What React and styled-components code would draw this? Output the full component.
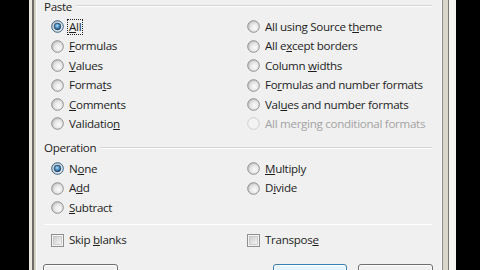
import styled, { createGlobalStyle } from "styled-components";

const GlobalStyle = createGlobalStyle`
  html, body {
    margin: 0;
    padding: 0;
    background: #000;
  }
  body {
    font-family: "Open Sans", "Noto Sans", sans-serif;
  }
`;

const Screen = styled.div`
  width: 480px;
  height: 270px;
  overflow: hidden;
  background: #000;
  display: flex;
  padding-left: 29px;
  box-sizing: border-box;
`;

const FrameLeft = styled.div`
  flex: none;
  width: 8px;
  background: linear-gradient(
    to right,
    #ebe8df 0 3px,
    #6d6c68 3px 5px,
    #d6d2c6 5px 7px,
    #fbfbfb 7px 8px
  );
`;

const FrameRight = styled.div`
  flex: none;
  width: 15px;
  background: linear-gradient(
    to right,
    #fdfdfd 0 1px,
    #8a8a88 1px 2px,
    #dad6ca 2px 7px,
    #7a7975 7px 8px,
    #f6f5f1 8px 15px
  );
`;

const Content = styled.div`
  flex: none;
  width: 404px;
  height: 270px;
  background: #f0f0f0;
  padding-left: 7px;
  box-sizing: border-box;
  display: flex;
  flex-direction: column;
  color: #1e1e1e;
  font-size: 11.6px;
  letter-spacing: -0.3px;
`;

const GroupHeader = styled.div`
  display: flex;
  align-items: center;
  gap: 4px;
  height: 12px;
  line-height: 12px;
  margin-right: 9px;
  margin-top: ${(p) => p.$top}px;
`;

const HeaderLine = styled.div`
  flex: 1;
  height: 1px;
  background: #d5d5d5;
  border-bottom: 1px solid #fdfdfd;
  margin-top: ${(p) => p.$offset || 0}px;
`;

const OptionGrid = styled.div`
  display: grid;
  grid-template-columns: 196px 1fr;
  grid-template-rows: repeat(${(p) => p.$rows}, ${(p) => p.$rowHeight}px);
  grid-auto-flow: column;
  padding-left: 7px;
  margin-top: ${(p) => p.$top}px;
`;

const Option = styled.label`
  display: flex;
  align-items: center;
  gap: 5px;
  white-space: nowrap;
  color: ${(p) => (p.$disabled ? "#a3a3a3" : "#1e1e1e")};
`;

const Text = styled.span`
  line-height: 14px;
  padding: 0 1px;
  margin-left: -1px;
  outline: ${(p) => (p.$focus ? "1px dotted #222" : "none")};
  outline-offset: 0;
`;

const Key = styled.span`
  text-decoration: underline;
  text-underline-offset: 1px;
`;

const Separator = styled.div`
  height: 1px;
  background: #d5d5d5;
  border-bottom: 1px solid #fdfdfd;
  margin: 6px 9px 0 0;
`;

const ButtonBar = styled.div`
  display: flex;
  justify-content: space-between;
  margin: 14px 8px 0 -1px;
`;

const ButtonGroup = styled.div`
  display: flex;
  gap: 11px;
`;

const Button = styled.button`
  width: ${(p) => p.$w}px;
  height: 23px;
  box-sizing: border-box;
  padding: 5px 0 0;
  line-height: 16px;
  border-radius: 3px;
  font: inherit;
  color: #1e1e1e;
  border: 1px solid ${(p) => (p.$default ? "#3c7fb1" : "#707070")};
  background: ${(p) =>
    p.$default
      ? "linear-gradient(#eaf6fd, #d9f0fc 50%, #bee6fd 51%, #a7d9f5)"
      : "linear-gradient(#f2f2f2, #ebebeb 50%, #dddddd 51%, #cfcfcf)"};
  box-shadow: inset 0 0 0 1px rgba(255, 255, 255, 0.8);
`;

function Radio({ checked, disabled }) {
  const ring = disabled ? "#cfcfcf" : checked ? "#2c628b" : "#8f8f8f";
  return (
    <svg width="13" height="13" viewBox="0 0 13 13" style={{ flex: "none" }}>
      <defs>
        <radialGradient id="rfill" cx="0.6" cy="0.6" r="0.6">
          <stop offset="0" stopColor="#fbfbfb" />
          <stop offset="0.6" stopColor="#e6e6e6" />
          <stop offset="1" stopColor="#c4c4c4" />
        </radialGradient>
        <radialGradient id="rdot" cx="0.45" cy="0.4" r="0.6">
          <stop offset="0" stopColor="#b9e0f7" />
          <stop offset="0.5" stopColor="#4b8dc0" />
          <stop offset="1" stopColor="#16426c" />
        </radialGradient>
      </defs>
      <circle
        cx="6.5"
        cy="6.5"
        r="5.8"
        fill={disabled ? "#f3f3f3" : "url(#rfill)"}
        stroke={ring}
        strokeWidth="1"
      />
      {checked && <circle cx="6.5" cy="6.5" r="3.4" fill="url(#rdot)" stroke="#1a3f63" strokeWidth="0.6" />}
    </svg>
  );
}

function Check() {
  return (
    <svg width="13" height="13" viewBox="0 0 13 13" style={{ flex: "none" }}>
      <defs>
        <linearGradient id="cfill" x1="0" y1="0" x2="1" y2="1">
          <stop offset="0" stopColor="#cbcbcb" />
          <stop offset="1" stopColor="#f6f6f6" />
        </linearGradient>
      </defs>
      <rect x="0.5" y="0.5" width="12" height="12" fill="#f4f4f4" stroke="#8f8f8f" />
      <rect x="2.5" y="2.5" width="8" height="8" fill="url(#cfill)" stroke="#b7b7b7" strokeWidth="0.6" />
    </svg>
  );
}

// label parts: [before, key, after]
const pasteLeft = [
  { t: ["", "A", "ll"], checked: true, focus: true },
  { t: ["", "F", "ormulas"] },
  { t: ["", "V", "alues"] },
  { t: ["Forma", "t", "s"] },
  { t: ["", "C", "omments"] },
  { t: ["Validatio", "n", ""] },
];

const pasteRight = [
  { t: ["All using Source t", "h", "eme"] },
  { t: ["All e", "x", "cept borders"] },
  { t: ["Column ", "w", "idths"] },
  { t: ["Fo", "r", "mulas and number formats"] },
  { t: ["Val", "u", "es and number formats"] },
  { t: ["All merging conditional formats", "", ""], disabled: true },
];

const opLeft = [
  { t: ["N", "o", "ne"], checked: true },
  { t: ["A", "d", "d"] },
  { t: ["", "S", "ubtract"] },
];

const opRight = [
  { t: ["", "M", "ultiply"] },
  { t: ["D", "i", "vide"] },
];

function Label({ t, focus }) {
  return (
    <Text $focus={focus}>
      {t[0]}
      {t[1] && <Key>{t[1]}</Key>}
      {t[2]}
    </Text>
  );
}

function RadioOption({ item }) {
  return (
    <Option $disabled={item.disabled}>
      <Radio checked={item.checked} disabled={item.disabled} />
      <Label t={item.t} focus={item.focus} />
    </Option>
  );
}

export default function App() {
  return (
    <>
      <GlobalStyle />
      <Screen>
        <FrameLeft />
        <Content>
          <GroupHeader $top={1}>
            <span>Paste</span>
            <HeaderLine $offset={-2} />
          </GroupHeader>
          <OptionGrid $rows={6} $rowHeight={19.4} $top={4.3}>
            {pasteLeft.map((o, i) => (
              <RadioOption key={"pl" + i} item={o} />
            ))}
            {pasteRight.map((o, i) => (
              <RadioOption key={"pr" + i} item={o} />
            ))}
          </OptionGrid>

          <GroupHeader $top={8}>
            <span>Operation</span>
            <HeaderLine />
          </GroupHeader>
          <OptionGrid $rows={3} $rowHeight={19.5} $top={5.5}>
            {opLeft.map((o, i) => (
              <RadioOption key={"ol" + i} item={o} />
            ))}
            {opRight.map((o, i) => (
              <RadioOption key={"or" + i} item={o} />
            ))}
          </OptionGrid>

          <Separator />

          <OptionGrid $rows={1} $rowHeight={19} $top={6}>
            <Option>
              <Check />
              <Label t={["Skip ", "b", "lanks"]} />
            </Option>
            <Option>
              <Check />
              <Label t={["Transpos", "e", ""]} />
            </Option>
          </OptionGrid>

          <ButtonBar>
            <Button $w={75}>Paste Link</Button>
            <ButtonGroup>
              <Button $w={74} $default>
                OK
              </Button>
              <Button $w={75}>Cancel</Button>
            </ButtonGroup>
          </ButtonBar>
        </Content>
        <FrameRight />
      </Screen>
    </>
  );
}
